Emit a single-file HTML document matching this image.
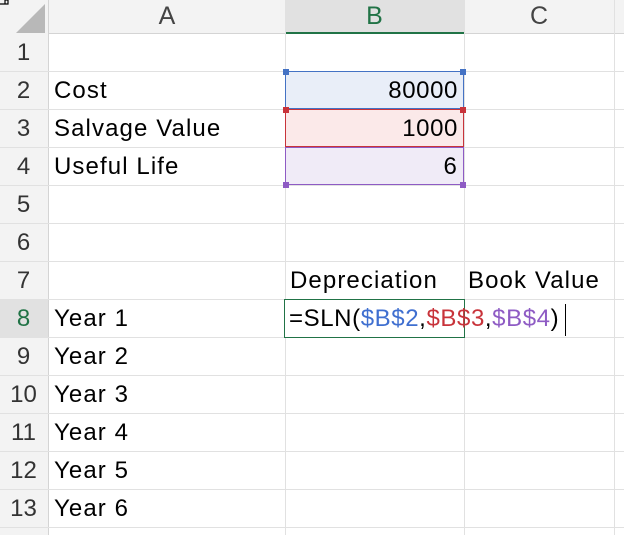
<!DOCTYPE html><html><head><style>
body{margin:0;width:624px;height:535px;background:#fff;overflow:hidden;font-family:"Liberation Sans",sans-serif;position:relative}
.a{position:absolute}
.hl{position:absolute;left:0;width:624px;height:1px;background:#e1e1e1}
.vl{position:absolute;top:0;width:1px;height:535px;background:#e1e1e1}
.rn{position:absolute;left:0;width:47px;text-align:center;font-size:24px;color:#333;height:38px;line-height:38px}
.t{position:absolute;font-size:24px;letter-spacing:1.1px;color:#000;height:38px;line-height:38px;white-space:nowrap}
.h{width:6px;height:6px;position:absolute}
</style></head><body>
<div class="a" style="left:0;top:0;width:624px;height:33px;background:#f3f3f3;border-bottom:1px solid #d4d4d4"></div>
<div class="a" style="left:0;top:0;width:48px;height:535px;background:#f3f3f3;border-right:1px solid #d4d4d4"></div>
<div class="a" style="left:285px;top:0;width:179px;height:32px;background:#e1e1e1;border-bottom:2px solid #217346"></div>
<svg class="a" style="left:15px;top:4px" width="30" height="29"><polygon points="30,0 30,29 1,29" fill="#b8b8b8"/></svg>
<svg class="a" style="left:0;top:0" width="12" height="12"><path d="M0 4h5V0h3v4h-3" fill="none" stroke="#000" stroke-width="1.2"/></svg>
<div class="t" style="left:49px;width:236px;top:-3px;text-align:center;color:#444;font-size:25px;letter-spacing:0">A</div>
<div class="t" style="left:285px;width:179px;top:-3px;text-align:center;color:#217346;font-size:25px;letter-spacing:0">B</div>
<div class="t" style="left:464px;width:150px;top:-3px;text-align:center;color:#444;font-size:25px;letter-spacing:0">C</div>
<div class="vl" style="left:285px"></div><div class="vl" style="left:464px"></div><div class="vl" style="left:614px"></div>
<div class="hl" style="top:71px"></div><div class="hl" style="top:109px"></div><div class="hl" style="top:147px"></div><div class="hl" style="top:185px"></div><div class="hl" style="top:223px"></div><div class="hl" style="top:261px"></div><div class="hl" style="top:299px"></div><div class="hl" style="top:337px"></div><div class="hl" style="top:375px"></div><div class="hl" style="top:413px"></div><div class="hl" style="top:451px"></div><div class="hl" style="top:489px"></div><div class="hl" style="top:527px"></div>
<div class="rn" style="top:34px">1</div><div class="rn" style="top:72px">2</div><div class="rn" style="top:110px">3</div><div class="rn" style="top:148px">4</div><div class="rn" style="top:186px">5</div><div class="rn" style="top:224px">6</div><div class="rn" style="top:262px">7</div><div class="rn" style="top:300px">8</div><div class="rn" style="top:338px">9</div><div class="rn" style="top:376px">10</div><div class="rn" style="top:414px">11</div><div class="rn" style="top:452px">12</div><div class="rn" style="top:490px">13</div>
<div class="a" style="left:0;top:300px;width:48px;height:38px;background:#e1e1e1"></div>
<div class="rn" style="top:300px;color:#217346">8</div>
<div class="a" style="left:285px;top:71px;width:177px;height:36px;background:#e9eef8;border:1px solid #4472c4"></div>
<div class="a" style="left:285px;top:109px;width:177px;height:36px;background:#fbe9e9;border:1px solid #c8333a"></div>
<div class="a" style="left:285px;top:147px;width:177px;height:36px;background:#f0ebf7;border:1px solid #8e5bc4"></div>
<div class="h" style="left:283px;top:69px;background:#4472c4"></div><div class="h" style="left:460px;top:69px;background:#4472c4"></div>
<div class="h" style="left:283px;top:107px;background:#c8333a"></div><div class="h" style="left:460px;top:107px;background:#c8333a"></div>
<div class="h" style="left:283px;top:182px;background:#8e5bc4"></div><div class="h" style="left:460px;top:182px;background:#8e5bc4"></div>
<div class="t" style="left:54px;top:72px">Cost</div>
<div class="t" style="left:54px;top:110px">Salvage Value</div>
<div class="t" style="left:54px;top:148px">Useful Life</div>
<div class="t" style="left:285px;width:173px;top:72px;text-align:right;letter-spacing:0.6px">80000</div>
<div class="t" style="left:285px;width:173px;top:110px;text-align:right;letter-spacing:0.6px">1000</div>
<div class="t" style="left:285px;width:173px;top:148px;text-align:right">6</div>
<div class="t" style="left:290px;top:262px">Depreciation</div>
<div class="t" style="left:468px;top:262px">Book Value</div>
<div class="a" style="left:284px;top:299px;width:179px;height:37px;border:1px solid #217346;background:#fff"></div>
<div class="t" style="left:289px;top:300px;letter-spacing:0.6px">=SLN(<span style="color:#3f6fd0">$B$2</span>,<span style="color:#c8333a">$B$3</span>,<span style="color:#8e5bc4">$B$4</span>)</div>
<div class="a" style="left:565px;top:304px;width:1px;height:32px;background:#000"></div>
<div class="t" style="left:54px;top:300px">Year 1</div><div class="t" style="left:54px;top:338px">Year 2</div><div class="t" style="left:54px;top:376px">Year 3</div><div class="t" style="left:54px;top:414px">Year 4</div><div class="t" style="left:54px;top:452px">Year 5</div><div class="t" style="left:54px;top:490px">Year 6</div>
</body></html>
